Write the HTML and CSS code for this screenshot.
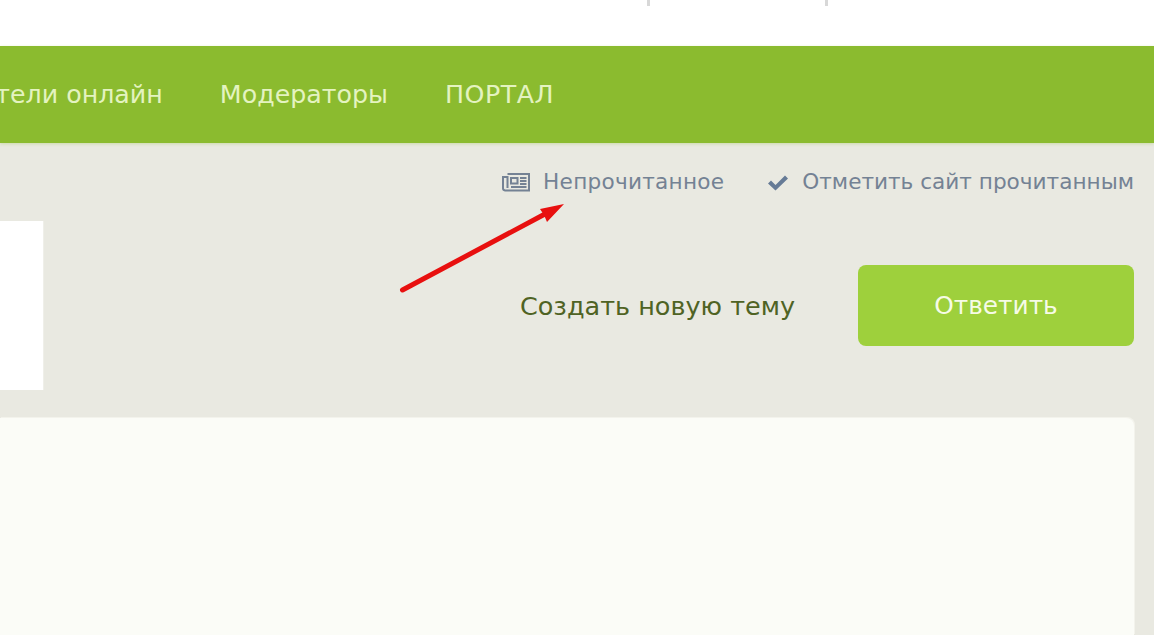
FILE: index.html
```html
<!DOCTYPE html>
<html lang="ru">
<head>
  <meta charset="UTF-8"/>
  <meta name="viewport" content="width=device-width,initial-scale=1"/>
  <title>Форум</title>
  <link rel="stylesheet" href="styles.css">
</head>
<body>

  <header class="top">
    <span class="tick"></span>
    <span class="tick"></span>
  </header>

  <nav class="mainnav">
    <a href="#">Пользователи онлайн</a>
    <a href="#">Модераторы</a>
    <a class="portal" href="#">ПОРТАЛ</a>
  </nav>

  <div class="quick">
    <a class="unread" href="#">
      <svg class="ico-news" width="28" height="19" viewBox="0 0 28 19" aria-hidden="true">
        <path d="M5.500 1h21.500v16.500H3A2.200 2.200 0 0 1 1 15.300V4h4.500v11" fill="none" stroke="#748294" stroke-width="2"/>
        <path d="M9 5h6.500v5.500H9z" fill="none" stroke="#748294" stroke-width="2"/>
        <path d="M18 5h6.500M18 8h6.500M18 11h6.500M9 14h15.500" stroke="#748294" stroke-width="1.800"/>
      </svg>
      Непрочитанное
    </a>
    <a href="#">
      <svg class="ico-check" width="22" height="17" viewBox="0 0 22 17" aria-hidden="true">
        <path d="M1 9.500 4 6.500 8.500 11 18 1.500 21 4.500 8.500 16.500z" fill="#667b96"/>
      </svg>
      Отметить сайт прочитанным
    </a>
  </div>

  <div class="toolbar">
    <div class="adbox"></div>
    <div class="actions">
      <a class="newtopic" href="#">Создать новую тему</a>
      <a class="reply" href="#">Ответить</a>
    </div>
  </div>

  <main class="panel"></main>

  <!-- annotation drawn over the screenshot -->
  <svg class="arrow" width="170" height="94" viewBox="0 0 170 94" aria-hidden="true">
    <path d="M3.500 90 146 14" stroke="#e8100f" stroke-width="5" stroke-linecap="round"/>
    <path d="M165 4 141 9 145 15 148 22z" fill="#e8100f"/>
  </svg>

</body>
</html>
```

FILE: styles.css
```css
html,body{height:100%}
body{margin:0;background:#e9e9e1;font-family:"DejaVu Sans",Verdana,sans-serif;overflow:hidden;position:relative}
a{text-decoration:none;color:inherit}

.top{height:46px;background:#fff;display:flex;padding-left:647px;gap:175px;box-sizing:border-box}
.tick{width:3px;height:6px;background:#d8d8d8}

.mainnav{height:97px;background:#8bbb2f;display:flex;justify-content:flex-end;align-items:center;gap:57px;padding-right:600px;white-space:nowrap;font-size:25.3px;color:#e4f3c0;box-shadow:0 1px 3px rgba(139,187,47,.3)}
.portal{letter-spacing:.5px}

.quick{display:flex;justify-content:flex-end;gap:43px;padding:26px 20px 0 0;font-size:21.6px;color:#748294;line-height:26px;height:26px}
.quick a{display:flex;align-items:center;gap:13px;white-space:nowrap}
.quick .unread{letter-spacing:.25px}

.toolbar{display:flex;justify-content:space-between;margin-top:26px;padding-right:20px}
.adbox{width:43px;height:169px;background:#fff;box-shadow:1px 0 0 #efefe9}
.actions{display:flex;align-items:center;gap:63px;height:81px;margin-top:44px}
.newtopic{font-size:25.5px;color:#4f6324;white-space:nowrap}
.reply{width:276px;height:81px;display:flex;align-items:center;justify-content:center;background:#9ed03c;border-radius:8px;color:#f6fbe6;font-size:24.800px}

.panel{margin:28px 20px 0 0;height:217px;background:#fbfcf7;border-radius:0 8px 0 0;box-shadow:1px -1px 0 #f3f3ec}

.arrow{position:absolute;left:399px;top:200px}
```
